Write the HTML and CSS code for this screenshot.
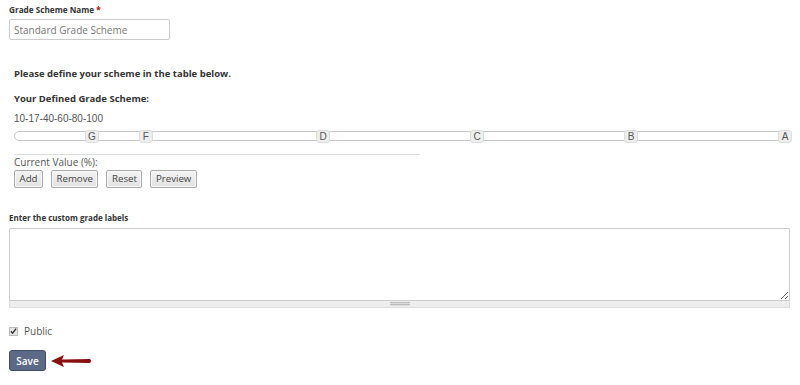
FILE: index.html
```html
<!DOCTYPE html>
<html>
<head>
<meta charset="utf-8">
<link rel="stylesheet" href="styles.css">
</head>
<body>
<div class="page">
  <div class="field">
    <label class="lbl">Grade Scheme Name <span class="req">*</span></label>
    <input class="name-input" type="text" placeholder="Standard Grade Scheme">
  </div>

  <div class="scheme">
    <p class="intro">Please define your scheme in the table below.</p>
    <p class="subhead">Your Defined Grade Scheme:</p>
    <p class="values">10-17-40-60-80-100</p>
    <div class="slider">
      <span class="handle" style="left:10%">G</span>
      <span class="handle" style="left:17%">F</span>
      <span class="handle" style="left:40%">D</span>
      <span class="handle" style="left:60%">C</span>
      <span class="handle" style="left:80%">B</span>
      <span class="handle" style="left:100%">A</span>
    </div>
    <div class="rule"></div>
    <div class="current">Current Value (%):</div>
    <div class="buttons">
      <button class="btn">Add</button>
      <button class="btn">Remove</button>
      <button class="btn">Reset</button>
      <button class="btn">Preview</button>
    </div>
  </div>

  <div class="field labels">
    <label class="lbl">Enter the custom grade labels</label>
    <textarea class="area"></textarea>
    <div class="grippie"><span class="grip"></span></div>
  </div>

  <div class="check-row">
    <span class="check"><svg width="8" height="8" viewBox="0 0 8 8"><path d="M1 4.2 L3 6.5 L7 1.2" fill="none" stroke="#333" stroke-width="1.6"/></svg></span>
    <span class="check-label">Public</span>
  </div>

  <div class="save-row">
    <button class="save">Save</button>
    <svg class="arrow" width="41" height="14" viewBox="0 0 41 14">
      <path d="M0 7 L13 1 L11 5.5 L39 5 Q41 7 39 9 L11 8.5 L13 13 Z" fill="#8a0f0f"/>
    </svg>
  </div>
</div>
</body>
</html>
```

FILE: styles.css
```css
html, body {
  margin: 0;
  padding: 0;
  background: #fff;
}
.page {
  padding: 4px 9px 0 9px;
  font-family: "Open Sans", "Liberation Sans", sans-serif;
  color: #333;
}
.field {
  display: flex;
  flex-direction: column;
  align-items: flex-start;
}
.lbl {
  font-size: 8.2px;
  font-weight: 700;
  color: #333;
  line-height: 12px;
  margin-bottom: 3px;
}
.req {
  color: #c00;
}
.name-input {
  box-sizing: border-box;
  width: 161px;
  height: 21px;
  border: 1px solid #ccc;
  border-radius: 2px;
  padding: 0 4px;
  font-family: "Open Sans", sans-serif;
  font-size: 10px;
  color: #555;
  margin: 0;
}
.name-input::placeholder {
  color: #777;
}
.scheme {
  padding: 0 5px;
  margin-top: 27px;
}
.intro, .subhead {
  margin: 0;
  font-size: 9.5px;
  font-weight: 700;
  color: #333;
  line-height: 14px;
}
.subhead {
  margin-top: 11px;
}
.values {
  margin: 6px 0 0 0;
  font-family: "Liberation Sans", Arial, sans-serif;
  font-size: 10px;
  color: #555;
  line-height: 14px;
}
.slider {
  position: relative;
  box-sizing: border-box;
  margin-top: 5px;
  width: 772px;
  height: 10px;
  border: 1px solid #c8c8c8;
  border-radius: 5px;
  background: #fff;
}
.handle {
  position: absolute;
  top: -2px;
  margin-left: -7px;
  box-sizing: border-box;
  width: 14px;
  height: 13px;
  background: #eee;
  border: 1px solid #ddd;
  border-radius: 3px;
  font-family: "Liberation Sans", Arial, sans-serif;
  font-size: 10px;
  line-height: 11px;
  text-align: center;
  color: #555;
}
.rule {
  margin-top: 13px;
  width: 406px;
  height: 1px;
  background: #ddd;
}
.current {
  margin-top: 1px;
  font-size: 10px;
  color: #555;
  line-height: 13px;
}
.buttons {
  display: flex;
  gap: 8px;
  margin-top: 1px;
}
.btn {
  box-sizing: border-box;
  height: 18px;
  padding: 0 4.5px;
  font-family: "Open Sans", sans-serif;
  font-size: 9.7px;
  color: #444;
  background: linear-gradient(#f4f4f4, #e2e2e2);
  border: 1px solid #aaa;
  border-radius: 2px;
  box-shadow: inset 0 0 0 1px #f8f8f8;
  line-height: 14px;
}
.labels {
  margin-top: 24px;
}
.labels .lbl {
  font-size: 8px;
  margin-bottom: 4px;
}
.area {
  box-sizing: border-box;
  display: block;
  width: 781px;
  height: 72px;
  margin: 0;
  border: 1px solid #ccc;
  border-bottom: none;
  border-radius: 2px 2px 0 0;
  resize: vertical;
}
.grippie {
  box-sizing: border-box;
  width: 781px;
  height: 8px;
  background: #eee;
  border: 1px solid #ddd;
  border-top-color: #ccc;
  display: flex;
  justify-content: center;
  align-items: center;
}
.grip {
  width: 20px;
  height: 4px;
  background: repeating-linear-gradient(#bbb 0 1px, #ddd 1px 2px);
}
.check-row {
  display: flex;
  align-items: center;
  margin-top: 16px;
}
.check {
  box-sizing: border-box;
  width: 9px;
  height: 9px;
  border: 1px solid #bbb;
  background: #e6e6e6;
  display: flex;
  align-items: center;
  justify-content: center;
}
.check-label {
  margin-left: 6px;
  font-size: 10px;
  color: #555;
}
.save-row {
  display: flex;
  align-items: center;
  margin-top: 12px;
}
.save {
  box-sizing: border-box;
  width: 37px;
  height: 21px;
  padding: 0;
  background: #5c6a88;
  border: 1px solid #3f4c68;
  border-radius: 3px;
  color: #fff;
  font-family: "Open Sans", sans-serif;
  font-size: 10px;
  font-weight: 600;
}
.arrow {
  margin-left: 5px;
}
```
